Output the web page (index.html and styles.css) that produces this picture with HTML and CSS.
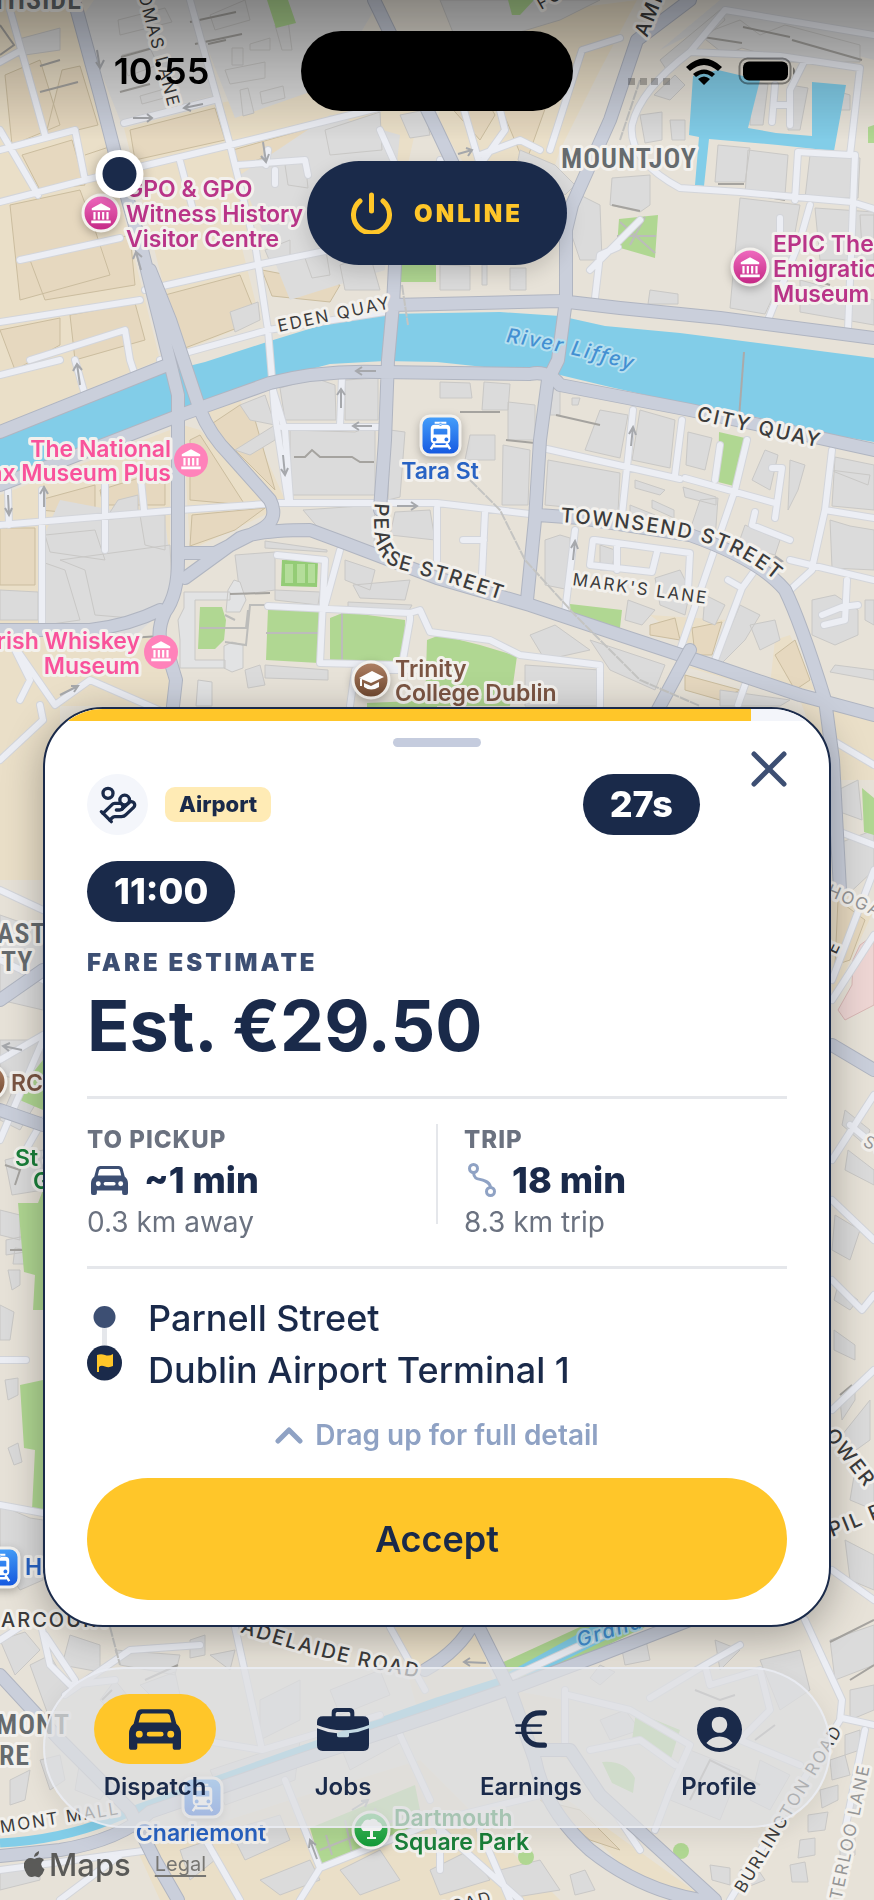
FILE: index.html
```html
<!DOCTYPE html>
<html lang="en">
<head>
    <meta charset="UTF-8">
    <meta name="viewport" content="width=device-width, initial-scale=1.0">
    <title>Dispatch</title>
    <link rel="stylesheet" href="styles.css">
</head>
<body>
<svg class="defs" width="0" height="0" aria-hidden="true">
    <symbol id="car" viewBox="0 0 157 123">
        <path fill-rule="evenodd" d="M38 0H119Q131 1 134 11L143 44Q157 56 157 73V115Q157 123 149 123H140Q132 123 132 115V104H25V115Q25 123 17 123H8Q0 123 0 115V73Q0 56 14 44L23 11Q26 1 38 0ZM41 13Q36 14 34 19L29 40H128L123 19Q121 14 116 13ZM31 65A10 10 0 1 0 31 86A10 10 0 1 0 31 65ZM126 65A10 10 0 1 0 126 86A10 10 0 1 0 126 65ZM61 68A7 7 0 0 0 61 83H97A7 7 0 0 0 97 68Z"/>
    </symbol>
    <symbol id="museum" viewBox="0 0 24 24">
        <path fill="#fff" d="M12 3 3.500 7.500V9.500H20.500V7.500ZM5 11H7V18H5ZM9 11H11V18H9ZM13 11H15V18H13ZM17 11H19V18H17ZM3 19H21V21.500H3Z"/>
    </symbol>
    <symbol id="train" viewBox="0 0 40 40">
        <path fill="#fff" fill-rule="evenodd" d="M14 6h12v2h-12zM19 7h2v3h-2zM14 9h12q4 0 4 4v11q0 4-4 4H14q-4 0-4-4V13q0-4 4-4zM14 13q-1 0-1 1v5h14v-5q0-1-1-1zM14 22a2 2 0 1 0 .1 0zM26 22a2 2 0 1 0 .1 0z"/>
        <path stroke="#fff" stroke-width="2.500" fill="none" d="M14 28l-4 6M26 28l4 6M13 31h14"/>
    </symbol>
</svg>

<!-- Map -->
<svg class="map" viewBox="0 0 874 1900" preserveAspectRatio="xMidYMin slice" role="img" aria-label="Map of central Dublin">
    <defs>
        <linearGradient id="pinkPin" x2="0" y2="1"><stop stop-color="#f06cc0"/><stop offset="1" stop-color="#c32683"/></linearGradient>
        <linearGradient id="bluePin" x2="0" y2="1"><stop stop-color="#45a0fb"/><stop offset="1" stop-color="#1457e0"/></linearGradient>
        <linearGradient id="brownPin" x2="0" y2="1"><stop stop-color="#b08164"/><stop offset="1" stop-color="#6e472f"/></linearGradient>
        <linearGradient id="greenPin" x2="0" y2="1"><stop stop-color="#4cc765"/><stop offset="1" stop-color="#119936"/></linearGradient>
        <path id="pearse" d="M375 503C372 535 376 560 396 568L450 583L520 606"/>
        <path id="townsend" d="M560 522Q640 528 700 541Q750 556 784 588"/>
        <path id="liffey" d="M506 342Q560 350 640 372"/>
        <path id="citypath" d="M696 420L830 450"/>
        <path id="adelaide" d="M240 1632Q320 1660 425 1679"/>
    </defs>

    <rect width="874" height="1900" fill="#e7e2d8"/>

    <!-- commercial areas -->
    <g fill="#eadfc8">
        <path d="M0 0H70L160 360L0 425ZM124 128L225 102L310 85L420 110L400 200L300 180L240 240L260 320L180 352ZM0 495L170 430V590L40 600V700H0ZM183 425L200 430L275 510L190 550ZM200 415L240 400L285 500L275 500ZM0 615L160 640L174 706H60V880H0ZM560 10L637 0L600 70L560 150L540 210L480 190L437 120L460 40L540 0ZM650 615L726 620L690 645ZM680 665L770 680L874 720V780H830L800 700ZM775 640L790 635L815 690L770 685Z"/>
        <path d="M830 880L874 910L832 1000ZM395 1627H475L500 1700L420 1720ZM137 1850L290 1800L420 1760L560 1900H160ZM510 1690L565 1700L570 1760L530 1750ZM540 1780L700 1895L640 1885Z"/>
    </g>
    <g fill="#e6d8bf" stroke="#cbbd9f" stroke-width="1">
        <path d="M5 75L40 60L60 125L12 145ZM62 70L80 66L98 125L45 138ZM22 155L72 140L85 185L40 190ZM85 155L115 145M130 130L215 108L225 140L135 160ZM233 150L310 128L314 140L240 166ZM262 96L300 90M10 205L80 190L95 230L110 275L20 300ZM30 260L130 235L135 285L45 300ZM165 295L240 275L258 320L185 348ZM262 270L340 285L330 302L272 296ZM0 330L60 318V345L15 370ZM70 315L135 303L145 340L75 360ZM40 500L95 485V515L40 510ZM190 440L200 435L245 505L190 500ZM192 515L265 508L235 530L190 546ZM210 425L240 405L255 420L275 490Z"/>
        <path d="M0 528H35V585H0ZM100 490L165 470V505H103ZM440 95L470 70L495 115L480 140ZM500 105L535 80L550 95L525 165ZM445 60L480 30L500 45L470 65ZM650 625L675 618L680 640L650 635ZM692 628L722 622L712 655L695 655ZM775 655L795 640L810 680L795 690ZM685 675L740 690L720 700L685 690ZM838 900L865 920L850 960L835 965ZM540 1800L580 1810L620 1850L590 1840Z"/>
    </g>

    <!-- blocks of grey buildings -->
    <g fill="#dcdcdc">
        <path d="M94 0H200L215 95L120 120L80 20ZM190 0H380L330 85L235 118L212 60ZM240 175L330 115L400 135L385 270L290 300ZM60 500L165 520L175 600L130 640L45 640L42 540ZM660 50L720 0H874V60L800 40L700 30Z"/>
    </g>
    <g class="buildings">
        <path d="M15 40L60 28V50L25 55ZM118 20L165 8L172 22L120 35ZM122 55L150 48L158 65L128 76ZM210 15L245 0L250 20L215 30ZM225 70L265 62V78L230 84ZM250 44L270 38V50H250ZM275 25L288 20L292 50H282ZM232 48H243V65H232ZM260 92L283 86L285 98L262 104ZM240 90L248 88L254 113L243 116ZM140 96L175 86V95L142 104ZM325 130L380 112L382 150L330 155ZM285 165L305 160L308 188L288 185ZM265 250L290 240V255L270 262ZM305 258L325 245L330 275L312 278ZM340 265L370 255L380 290L345 290ZM230 312L258 302L260 320L235 332ZM400 115L425 110L430 135L410 138ZM440 0L600 0L560 20L460 50ZM520 150L555 165L575 185L565 195L518 160Z"/>
        <path d="M700 35L740 20L760 35L785 25L860 45V62H790L742 48L725 55ZM660 60L720 10L725 20L668 72ZM640 115L662 112V140L645 143ZM670 120H685V140H672ZM654 95L670 100L685 85L675 75ZM790 85L808 88L800 130H788ZM752 82L768 84L763 125H750ZM840 92L850 95V110H840ZM612 178L650 175V205L640 212L610 205ZM718 145L750 148L745 182H715ZM748 150L788 155L785 195H745ZM810 155L860 158L858 198H805ZM740 198L800 205L790 260L765 314L730 308ZM815 208L874 212V260H820ZM580 195L600 205L602 260H580L570 230ZM860 215H874V250H862ZM800 280L874 300V325L800 312ZM650 290L678 294V304H648ZM440 265L470 266V290H440ZM510 268H526V290H510ZM482 265V285H487V265Z"/>
        <path d="M240 405L265 395L275 425L250 420ZM280 388L315 378L335 385L336 420H285ZM345 380L378 378V420H345ZM290 430L355 432L375 425V495L290 495ZM235 450L275 425V440L250 455ZM390 430L405 432L400 497L388 500ZM303 510L375 505L374 548L320 530ZM395 512L430 510L435 540L390 535ZM118 500L138 495V515L105 520ZM140 515H165V550L145 545ZM45 535L95 530L105 560L50 552ZM45 563L65 570L80 620L45 625ZM60 560L170 545L172 590L155 620L95 615L85 570ZM0 590L38 592V620H0ZM235 555L275 552V590L240 595ZM265 541L327 550V552L265 548ZM275 590L320 592L318 605L275 600ZM345 560L375 570L370 590L345 580ZM353 585L410 580L405 600L360 598ZM348 602L412 605L408 612L348 608ZM265 665L328 670V680L265 678ZM245 670L260 665L265 685L248 688Z"/>
        <path fill="#e2e3e4" d="M184 592H230V600H195V660H225V668H180V640L178 620L184 608ZM228 590L234 580L240 582L246 600L240 612H226ZM224 646L232 642L243 645V668L232 672L224 668ZM198 680L212 682V706H196Z"/>
        <path d="M440 382L470 383L472 398H440ZM484 382L510 384L508 410H482ZM508 402L535 405V440H508ZM503 445L530 450L528 505H502ZM470 435H495V460H465ZM553 390L560 385V415H550ZM572 398H580L578 405H572ZM600 410L628 415L620 458L585 450ZM640 410L675 420L670 468L632 460ZM688 432L712 438L705 470L686 465ZM548 460L620 473L618 512L545 505ZM635 480L665 490L660 495L635 488ZM683 487L716 497V505L685 497ZM652 500L674 510V518L652 508ZM718 498L715 540L690 530L700 500ZM630 505L655 515V525L630 522ZM745 525L780 540L775 555L738 545ZM765 450L778 455L770 490L752 480ZM790 460L805 465L798 490L788 510ZM835 457L874 465V510L832 506ZM830 520L850 526L874 530V570L832 568ZM560 535L570 538V590L545 585V540ZM600 545L615 550L612 570H600ZM655 578L680 570L690 590L685 615L660 605ZM628 600L655 610L642 625L625 620ZM705 595L725 605L715 625L703 620ZM740 605L760 615L745 640L720 665H715ZM750 625L775 620L780 640L760 650ZM530 635L555 625L590 650L545 660ZM525 665L600 670V706H525ZM590 640L665 665L655 690L610 670ZM720 690L790 700L780 706H720ZM830 470L870 475L868 485ZM812 600L835 595L858 610V635L835 645L812 635ZM865 600H874V625L865 620ZM835 665L874 670V680L830 672Z"/>
        <path d="M0 1040H43V1085L0 1075ZM15 1085L38 1100L20 1130L0 1120ZM5 1160L43 1150V1190L12 1195ZM0 1210L20 1215V1240L0 1235ZM15 1248L30 1250V1264H13ZM0 1305L14 1312L10 1340H0ZM6 1240L25 1236V1252L6 1255ZM8 1270H20V1285L12 1290ZM0 915L43 930V1010L0 1000ZM5 1380L18 1378V1395L8 1400ZM8 1448L18 1443L22 1462L14 1465ZM0 1505L30 1518L43 1520V1580L20 1590L0 1560Z"/>
        <path d="M838 790L858 780L862 820L840 812ZM842 842L874 830V870L842 900ZM845 1110L870 1130L865 1145L842 1125ZM848 1150L874 1170V1185L845 1170ZM835 1215L860 1230L850 1260L832 1250ZM838 1285L858 1300L850 1310L834 1300ZM834 1330L855 1345V1360L834 1350ZM840 1400L855 1385V1400L842 1420ZM838 1440L870 1400V1440L842 1460ZM855 1470L874 1475V1510L850 1500ZM845 1540L874 1555V1590L850 1580Z"/>
        <path d="M70 1635L100 1645V1672L62 1665ZM0 1640L25 1632L40 1650L15 1675ZM30 1665L50 1655L70 1690L60 1700L50 1720ZM115 1650L180 1655L175 1675L120 1665ZM190 1640L205 1635V1655L190 1658ZM210 1655L235 1650L230 1670ZM140 1685L175 1672L180 1695H150ZM100 1700L115 1680L135 1705L120 1720ZM260 1700L300 1680V1720L260 1740ZM330 1690L380 1670L390 1695L340 1715ZM40 1760L60 1755L65 1780L50 1790ZM10 1780L30 1770L25 1800L10 1805ZM80 1760L110 1785L100 1800L75 1790ZM0 1870L40 1860V1880L0 1890ZM210 1770L300 1740L295 1780L225 1805ZM340 1745L400 1720L405 1740L350 1770ZM180 1850L210 1840L215 1860L190 1880ZM230 1830L280 1815L290 1840L245 1860ZM260 1880L310 1860L320 1880L280 1895ZM340 1870L380 1850L400 1880L360 1895ZM430 1870L470 1850L490 1880L440 1895Z"/>
        <path d="M600 1665L615 1672L600 1685L590 1678ZM620 1640L645 1635L650 1660L625 1665ZM715 1640L740 1650L720 1670ZM760 1660L800 1650L810 1690L780 1710ZM830 1640L874 1625V1665L835 1680ZM850 1690L874 1685V1710L850 1720ZM600 1720L625 1710L640 1730L610 1740ZM690 1750L740 1770L720 1820L670 1800ZM760 1760L790 1775L770 1810L750 1800ZM845 1735L860 1730V1750L845 1755ZM830 1760L845 1755L850 1775L832 1780ZM820 1790L838 1785V1800L822 1808ZM808 1815L828 1812L825 1830L808 1832ZM800 1840L815 1838V1855L798 1858ZM790 1865L805 1862L808 1882H792ZM850 1790L862 1785V1810L848 1815ZM840 1840L855 1835V1855L840 1860ZM710 1865L730 1868V1885L712 1880ZM500 1870L540 1860L560 1890L510 1898ZM570 1875L585 1870L595 1890L575 1895ZM740 1870L755 1865L765 1880L745 1888Z"/>
        <path fill="#eed6d4" stroke="#d9b7b5" d="M853 960L860 945L874 935V1005L845 1020L838 1010L852 985Z"/>
    </g>
    <path class="walls" d="M121 57L160 46M120 92L150 84M40 92L78 82M40 66L60 60M190 22L236 12M195 44L242 34M208 44L226 40M294 457H305L312 450L320 457H352L360 462H374M0 25L14 45L0 55M703 37L742 43M743 27L790 37M792 40L862 60M612 205L640 211M718 184H744M745 193L785 200M800 275L830 285M460 412H500M506 440L535 443M556 415L600 425M160 636L100 640M230 594L270 593M5 1165L20 1170L15 1185M10 1250H30M840 1395L852 1385M830 1642L874 1620M850 1680L874 1665M695 1690L720 1700L735 1695M755 1740L775 1725M102 1700L112 1690M145 1680L178 1665M690 1800L710 1760L760 1785"/>

    <!-- parks -->
    <g fill="#b0d792">
        <path d="M267 0H288L296 23L276 28ZM508 0H534L520 15H512ZM619 219L658 215L655 258L617 247ZM399 265H436V282H398ZM719 432L745 438L734 486L718 482ZM874 125L868 127V143H874ZM570 604L622 610L620 628L571 615Z"/>
        <path d="M200 607H222L226 620L224 640L215 649H198ZM268 609L320 610L319 663L266 660ZM330 618L345 612L405 620L404 666L330 661ZM427 640L440 635L480 645L517 656L510 706H425ZM367 703L437 700V710H367Z"/>
        <path d="M43 1060V1110L15 1098L25 1082L35 1070ZM43 1190V1310L33 1310L35 1275L24 1272L18 1203L38 1203ZM20 1385L43 1380V1510H32L35 1450L24 1448ZM862 788L874 798V835L864 832ZM497 1665L580 1627H645L560 1668L508 1680ZM310 1828L415 1785L424 1830L322 1868ZM636 1712L680 1730L670 1762L632 1740ZM602 1762Q625 1760 635 1778L633 1793L612 1783Z"/>
        <circle cx="526" cy="1857" r="8"/><circle cx="681" cy="1851" r="8"/><path d="M670 1862L678 1845L688 1855Z"/>
    </g>
    <path fill="#94cc76" d="M282 560L318 561L317 587L281 586Z"/>
    <path fill="#b4dd9a" d="M285 564H293V583H285ZM297 564H305V583H297ZM308 564H315V583H308Z"/>
    <path fill="none" stroke="#bcbcba" stroke-width="2" d="M200 628H246L248 610M225 615L235 620M225 642L246 645L250 605H266M342 613V660M266 633H318M620 222L655 253M617 236H656M645 217L630 245M326 1835L332 1855M345 1820L352 1853M375 1808L383 1840M320 1850L420 1810"/>

    <!-- water -->
    <g fill="#82cde8">
        <path d="M0 438L165 372L205 362L270 341L335 321L385 314L500 312L560 316L605 326L680 333L874 358V442L833 435L760 418L690 405L610 387L560 375L437 362L385 361L330 364L270 380L205 404L175 413L90 447L0 488Z"/>
        <path d="M693 76L718 70L760 80L748 128L776 133L812 136V82L846 85L834 151L778 145L709 139L704 186L695 185L699 137L689 135Z"/>
    </g>
    <path fill="none" stroke="#82cde8" stroke-width="9" d="M0 1843Q60 1840 110 1820L140 1808L260 1765L437 1702L500 1682L600 1627"/>
    <path fill="none" stroke="#82cde8" stroke-width="14" d="M525 1672L610 1630"/>
    <path fill="none" stroke="#aaa" stroke-width="2" d="M744 352L739 418"/>

    <!-- minor roads -->
    <g class="minor-edge">
        <path id="minor" d="M0 62L18 52M10 10L45 135M0 130L38 195M0 150L75 130L85 180M0 202L85 180L230 145L390 105M124 123L214 100M190 0L230 145L256 250L268 330L275 415L288 500M180 161L193 210M20 260L120 238M145 290L256 265L330 250M0 322L140 300M160 360L268 330L385 312M30 360L125 330L130 360M0 375L60 360M238 165L305 160L308 175M266 165L268 150M275 170V184M380 130L400 175M464 110L480 165L505 130L500 110M440 160L525 185M550 150L582 50L620 38M480 155L520 140L540 150M437 70L460 55M640 220L590 270M595 298L600 255L618 247M874 35L725 10L690 52Q640 90 632 125Q628 160 680 188L740 192L852 202L874 209M690 52L780 56L860 68L850 155L798 152L795 200M855 155L848 330M810 205L800 240L768 320M780 218V245M775 85L772 122M805 60L790 90V125M775 105H790M75 360L85 395M130 360L135 375M8 490L9 525M0 525L180 510L280 503L437 503L530 514M42 490V630M105 480V550M140 470L144 510M273 390L285 430L290 500M342 377L340 425M282 427H380M633 410L622 515M682 420L675 475M547 449L680 479M685 478L775 503M720 445L715 480M747 440L735 490L680 650M772 468H782L775 518M755 512L752 525L790 540M832 450L825 510L812 568M825 510L874 518M790 560L874 580M790 590L812 570M575 530L565 612M595 540L690 553L688 590M593 540L590 565L652 572L657 552M617 545V570M690 590L685 600M728 580L742 588L715 660M742 588L755 570M437 508V560M463 540H484M485 512L482 575M847 580L845 620L824 625M858 605L842 607L822 615M268 606L410 613M410 613V620L402 665L320 663L325 560L277 555M325 605L340 550M410 613L420 610L430 632L490 640L520 655L600 665V706M350 706L355 670L435 670M738 705L745 685"/>
    </g>
    <use href="#minor" class="minor"/>
    <g class="minor-edge">
        <path id="minor2" d="M10 640L55 705L90 680L170 715M20 700L30 680L10 640M40 705L43 720M0 760L43 720M0 890L43 910M0 1060L43 1035M43 980L0 960M0 1140L43 1040M20 1160L43 1120M0 1360H26M0 1505L43 1513M832 740L874 765M835 830L874 845M874 870L832 980M874 935L832 1000M832 1160L874 1095M850 1125L874 1145M832 1200L874 1240M832 1280L862 1310L874 1295M832 1410L874 1370M832 1570L874 1600M40 1620L50 1665L70 1685L115 1680M65 1695L130 1650L200 1645M235 1627L262 1750M390 1627L425 1690M45 1635L75 1680M150 1700L200 1740L262 1750L380 1715M285 1780L320 1868L300 1900M320 1868L440 1820L560 1790M400 1735L430 1800M200 1830L240 1900M0 1870L150 1850M120 1855L60 1900M505 1680L620 1627M565 1690V1750M568 1695L630 1710L690 1745L670 1790L655 1830M590 1750L640 1740L675 1765M650 1698L705 1665L710 1685L760 1670L770 1710L740 1740M705 1665L740 1645M740 1740L800 1765M805 1620L842 1700L840 1720L730 1900M842 1718L874 1725M865 1730L845 1830M0 1910M430 1820L520 1900M480 1830L510 1900M440 1820V1870M0 1640L20 1627M600 1790L640 1850"/>
    </g>
    <use href="#minor2" class="minor"/>

    <!-- main roads -->
    <g class="major-edge">
        <path id="major" d="M74 0L100 95L118 165L142 250L162 330L178 395M374 0L437 130L470 200M690 0L637 40L610 120L572 205L566 230V300L558 360L548 380L540 440L535 520L527 600M395 265L393 305L388 360L385 440L380 510M393 305L437 304L560 301L620 308L720 318L874 338M0 432L165 366M0 485L175 417L200 408L270 383Q320 370 380 372L530 374Q548 370 560 385L690 410L760 425L874 450M178 395V560Q178 595 165 612Q152 640 170 660L176 680L172 715M150 270L170 320L200 410Q210 435 230 455L270 500Q280 520 260 530L215 553H185M185 578L240 538Q260 530 310 530L345 543L437 578L530 605L620 635L720 668L800 695L874 715M160 610Q130 625 90 630H0M538 515L580 518L690 535Q760 560 785 590Q800 620 825 700L833 760L840 890"/>
    </g>
    <use href="#major" class="major"/>
    <g class="major-edge">
        <path id="major2" d="M0 1110L43 1125M832 1045L874 1070M690 650L655 715M0 1675L60 1740L130 1810L155 1860L178 1900M0 1856L60 1850Q120 1840 150 1812L300 1760L437 1714L520 1685L600 1655L690 1620M425 1670Q460 1650 475 1620L510 1690L535 1760Q545 1810 590 1850Q640 1890 700 1900M535 1750H570L600 1795L715 1900M0 1000L43 970"/>
    </g>
    <use href="#major2" class="major"/>
    <path class="rail" d="M402 285L408 325M640 80L620 140M470 480L500 510L525 560L575 615L640 680L700 706M110 1627L120 1665"/>

    <!-- one-way arrows -->
    <g class="arrows">
        <path d="M97 50L100 68M96 62L100 68L104 60M133 118H152M147 114L152 118L147 122M203 104L184 108M190 103L184 108L191 111M263 142L266 162M261 156L266 162L269 154M141 270L136 252M133 259L136 252L142 257M80 385L77 364M73 371L77 364L82 370M376 371H356M362 367L356 371L362 375M341 408V389M337 395L341 389L345 395M372 426H353M359 422L353 426L359 430M283 455L285 475M281 469L285 475L288 468M8 495L9 515M5 508L9 515L12 508M44 507V487M40 494L44 487L48 494M397 506H417M411 502L417 506L411 510M631 446L633 427M629 434L633 427L636 435M573 560L575 541M571 548L575 541L578 549M765 555L782 561M775 556L782 561L775 564M60 695L78 686M71 686L78 686L74 692M458 154L472 150M466 148L472 150L468 156M22 1050L3 1046M10 1043L3 1046L9 1051M352 1810L368 1800M361 1801L368 1800L365 1807M317 1859L310 1840M309 1848L310 1840L316 1845M486 1663L464 1662M470 1658L464 1662L470 1666"/>
    </g>

    <!-- street labels -->
    <g class="label street">
        <text class="thin" transform="translate(131 -32) rotate(75)">THOMAS LANE</text>
        <text class="thin" x="279" y="332" transform="rotate(-12 279 332)">EDEN QUAY</text>
        <text x="647" y="38" transform="rotate(-68 647 38)">AMIENS</text>
        <text class="thin" x="541" y="10" transform="rotate(-30 541 10)">FOLEY</text>
        <text><textPath href="#citypath">CITY QUAY</textPath></text>
        <text><textPath href="#townsend">TOWNSEND STREET</textPath></text>
        <text><textPath href="#pearse">PEARSE STREET</textPath></text>
        <text class="thin" x="572" y="585" transform="rotate(8 572 585)">MARK'S LANE</text>
        <text class="faint" x="826" y="895" transform="rotate(23 826 895)">HOGAN</text>
        <text class="thin" x="836" y="955" transform="rotate(-65 836 955)">E</text>
        <text class="faint" x="862" y="1145" transform="rotate(30 862 1145)">SO</text>
        <text x="1" y="1627">ARCOURT</text>
        <text><textPath href="#adelaide">ADELAIDE ROAD</textPath></text>
        <text class="thin" x="1" y="1833" transform="rotate(-9 1 1833)">MONT MALL</text>
        <text class="thin" x="744" y="1894" transform="rotate(-59 744 1894)">BURLINGTON ROAD</text>
        <text class="faint" x="835" y="1930" transform="rotate(-78 835 1930)">WATERLOO LANE</text>
        <text x="824" y="1435" transform="rotate(52 824 1435)">OWER</text>
        <text x="832" y="1537" transform="rotate(-22 832 1537)">PIL R</text>
        <text class="thin" x="440" y="1916" transform="rotate(-14 440 1916)">ROAD</text>
    </g>
    <g class="label water">
        <text><textPath href="#liffey">River Liffey</textPath></text>
        <text x="579" y="1647" transform="rotate(-17 579 1647)">Grand Canal</text>
    </g>
    <g class="label district">
        <text x="-60" y="9">NORTHSIDE</text>
        <text x="561" y="168">MOUNTJOY</text>
        <text x="-3" y="943">AST</text>
        <text x="1" y="971">TY</text>
        <text x="-4" y="1734">MONT</text>
        <text x="-1" y="1765">RE</text>
    </g>

    <!-- places -->
    <g class="pin">
        <circle cx="101" cy="213" r="18" fill="url(#pinkPin)"/>
        <use href="#museum" x="88" y="200" width="26" height="26"/>
        <circle cx="750" cy="267" r="18" fill="url(#pinkPin)"/>
        <use href="#museum" x="737" y="254" width="26" height="26"/>
        <circle cx="371" cy="680" r="18" fill="url(#brownPin)"/>
        <path stroke="none" fill="#fff" d="M359 678L372 671L384 677L371 683ZM364 683L371 686L379 682V687Q371 692 364 687ZM360 679H362V686H360Z"/>
        <circle cx="-12" cy="1082" r="18" fill="url(#brownPin)"/>
        <circle cx="371" cy="1830" r="18" fill="url(#greenPin)"/>
        <path stroke="none" fill="#fff" d="M370 1828H373V1837H376V1839H367V1837H370Z"/>
        <path stroke="none" fill="#fff" d="M363 1831A5 5 0 0 1 363 1823A5 5 0 0 1 370 1820A5 5 0 0 1 378 1822A5 5 0 0 1 380 1831Z"/>
        <rect x="421" y="416" width="39" height="39" rx="9" fill="url(#bluePin)"/>
        <use href="#train" x="421" y="416" width="39" height="39"/>
        <rect x="183" y="1778" width="39" height="39" rx="9" fill="url(#bluePin)"/>
        <use href="#train" x="183" y="1778" width="39" height="39"/>
        <rect x="-20" y="1548" width="39" height="39" rx="9" fill="url(#bluePin)"/>
        <use href="#train" x="-20" y="1548" width="39" height="39"/>
    </g>
    <circle cx="191" cy="460" r="17" fill="#ff82ba"/>
    <use href="#museum" x="178" y="446" width="26" height="26"/>
    <circle cx="161" cy="652" r="17" fill="#ff82ba"/>
    <use href="#museum" x="148" y="638" width="26" height="26"/>

    <g class="label place">
        <g fill="#b93488">
            <text x="126" y="197">GPO &amp; GPO</text>
            <text x="126" y="222">Witness History</text>
            <text x="126" y="247">Visitor Centre</text>
            <text x="773" y="252">EPIC The Irish</text>
            <text x="773" y="277">Emigration</text>
            <text x="773" y="302">Museum</text>
        </g>
        <g fill="#f9529b" text-anchor="end">
            <text x="171" y="457">The National</text>
            <text x="171" y="481">Wax Museum Plus</text>
            <text x="140" y="649">Irish Whiskey</text>
            <text x="140" y="674">Museum</text>
        </g>
        <g fill="#7b5543">
            <text x="395" y="677">Trinity</text>
            <text x="395" y="701">College Dublin</text>
            <text x="11" y="1091">RCSI</text>
        </g>
        <g fill="#2863c4">
            <text x="440" y="479" text-anchor="middle">Tara St</text>
            <text x="201" y="1841" text-anchor="middle">Charlemont</text>
            <text x="25" y="1575">Harcourt</text>
        </g>
        <g fill="#1a803a">
            <text x="394" y="1826">Dartmouth</text>
            <text x="394" y="1850">Square Park</text>
            <text x="15" y="1166">St Stephen's</text>
            <text x="33" y="1189">Green</text>
        </g>
    </g>

    <g class="driver">
        <circle cx="119.500" cy="174" r="24" fill="#fff"/>
        <circle cx="119.500" cy="174" r="17" fill="#1a2a4a"/>
    </g>
</svg>

<div class="screen">
    <header class="status-bar">
        <span class="clock">10:55</span>
        <span class="island"></span>
        <span class="indicators">
            <svg class="signal" viewBox="0 0 42 7"><path d="M0 0h7v7h-7zM12 0h7v7h-7zM23 0h7v7h-7zM35 0h7v7h-7z"/></svg>
            <svg class="wifi" viewBox="0 0 36 27">
                <path d="M18 27l-6-6q6-5 12 0zM7 16l3 3q8-6.500 16 0l3-3q-11-9-22 0zM0 9l4 4q14-12 28 0l4-4q-18-17-36 0z"/>
            </svg>
            <svg class="battery" viewBox="0 0 60 28">
                <rect x="1.500" y="1.500" width="51" height="25" rx="8" fill="none" stroke="#000" stroke-opacity=".4" stroke-width="2"/>
                <rect x="5" y="4.500" width="45" height="19" rx="6"/>
                <path d="M55 10q4 4 0 8z" fill-opacity=".45"/>
            </svg>
        </span>
    </header>

    <button class="online-btn" type="button">
        <svg class="power" viewBox="0 0 41 42"><path d="M9 9A18 18 0 1 0 32 9M20.500 3V19"/></svg>
        ONLINE
    </button>

    <main class="sheet">
        <div class="countdown"><div class="countdown-fill" style="width: 90%"></div></div>
        <div class="handle"></div>

        <div class="sheet-head">
            <span class="round-icon">
                <svg viewBox="0 0 24 24">
                    <path d="M11 15h2a2 2 0 1 0 0-4h-3c-.6 0-1.100.2-1.400.6L3 17"/>
                    <path d="m7 21 1.600-1.400c.3-.4.8-.6 1.400-.6h4c1.100 0 2.100-.4 2.800-1.200l4.600-4.400a2 2 0 0 0-2.750-2.910l-4.200 3.900"/>
                    <path d="m2 16 6 6"/>
                    <circle cx="16" cy="9" r="2.900"/>
                    <circle cx="6" cy="5" r="3"/>
                </svg>
            </span>
            <span class="tag">Airport</span>
            <span class="chip timer">27s</span>
            <button class="close-btn" type="button" aria-label="Close">
                <svg viewBox="0 0 36 36"><path d="M3 3L33 33M33 3L3 33"/></svg>
            </button>
        </div>
        <span class="chip">11:00</span>

        <h2 class="fare-label">FARE ESTIMATE</h2>
        <p class="fare">Est. €29.50</p>

        <div class="stats">
            <div class="stat">
                <h3 class="stat-label">TO PICKUP</h3>
                <p class="stat-value">
                    <svg class="stat-car"><use href="#car"/></svg>
                    ~1 min
                </p>
                <p class="stat-note">0.3 km away</p>
            </div>
            <div class="stat-divider"></div>
            <div class="stat">
                <h3 class="stat-label">TRIP</h3>
                <p class="stat-value">
                    <svg class="stat-route" viewBox="0 0 28 34"><circle cx="5.500" cy="5.500" r="4"/><circle cx="22.500" cy="28.500" r="4"/><path d="M5.500 9.500C6 18 12 15 17 18Q22 20 22.500 24.500"/></svg>
                    18 min
                </p>
                <p class="stat-note">8.3 km trip</p>
            </div>
        </div>

        <div class="route">
            <svg class="route-marks" viewBox="0 0 35 104">
                <path fill="#e5e7eb" d="M15 36H20V56H15Z"/>
                <circle cx="17.500" cy="25" r="11" fill="#3d4f73"/>
                <circle cx="17.500" cy="71" r="17.500" fill="#1a2a4a"/>
                <path fill="#ffc629" d="M10 63q4-1.500 8 0t8-1v12q-4 2-8 .5t-6 .5v5h-2z"/>
            </svg>
            <ul class="stops">
                <li>Parnell Street</li>
                <li>Dublin Airport Terminal 1</li>
            </ul>
        </div>

        <p class="drag-hint">
            <svg viewBox="0 0 28 18"><path d="M3 15L14 4L25 15"/></svg>
            Drag up for full detail
        </p>
        <button class="accept-btn" type="button">Accept</button>
    </main>

    <nav class="tab-bar">
        <a class="tab active" href="#dispatch">
            <span class="tab-icon"><svg class="tab-car"><use href="#car"/></svg></span>
            Dispatch
        </a>
        <a class="tab" href="#jobs">
            <span class="tab-icon">
                <svg class="tab-jobs" viewBox="0 0 156 129">
                    <path d="M44 25V14Q44 0 58 0H98Q112 0 112 14V25H138Q156 25 156 42V51Q78 83 0 51V42Q0 25 18 25ZM56 25H100V17Q100 12 95 12H61Q56 12 56 17Z"/>
                    <path d="M0 61Q30 74 60 76V83Q60 88 66 88H90Q96 88 96 83V76Q126 74 156 61V112Q156 129 139 129H17Q0 129 0 112Z"/>
                </svg>
            </span>
            Jobs
        </a>
        <a class="tab" href="#earnings">
            <span class="tab-icon">
                <svg class="tab-euro" viewBox="0 0 96 113">
                    <path stroke-width="16" d="M88 8H74C46 8 26 28 26 56.500S46 105 74 105H88"/>
                    <path stroke-width="7" d="M4 46H78M4 68H78"/>
                </svg>
            </span>
            Earnings
        </a>
        <a class="tab" href="#profile">
            <span class="tab-icon">
                <svg class="tab-profile" viewBox="0 0 134 134">
                    <path d="M67 0A67 67 0 1 0 67 134A67 67 0 1 0 67 0ZM67 29C81 29 90 39 90 52S81 77 67 77S44 66 44 52S53 29 67 29ZM28 107Q45 88 67 88T106 107Q90 122 67 122T28 107Z"/>
                </svg>
            </span>
            Profile
        </a>
    </nav>

    <footer class="attribution">
        <svg class="apple" viewBox="0 0 21 27"><path d="M15 0q.5 5-5 6Q10 2 15 0ZM10.500 8q2-1.500 5-1.500t4.500 2.500q-6 4 .5 9.500-1.500 5-5 7.500-1.500.5-3-.3t-3.500.1Q5 27 2.500 22.500-3 13 2.500 8.500 6 6 10.500 8Z"/></svg>
        <span class="maps">Maps</span>
        <a class="legal" href="#legal">Legal</a>
    </footer>
</div>
</body>
</html>
```
FILE: styles.css
```css
:root {
    --navy: #1a2a4a;
    --slate: #3d4f73;
    --mist: #8fa2c4;
    --yellow: #ffc629;
    --grey: #6b7280;
    --line: #e5e7eb;
}

* {
    margin: 0;
    padding: 0;
    box-sizing: border-box;
}

body {
    position: relative;
    min-height: 100vh;
    overflow-x: hidden;
    font-family: Inter, "Liberation Sans", sans-serif;
    color: var(--navy);
    background: #e7e2d8;
}

button {
    border: none;
    font: inherit;
    color: inherit;
    background: none;
    cursor: pointer;
}

svg {
    display: block;
    flex: none;
}

.defs {
    position: absolute;
}

/* Map */
.map {
    position: absolute;
    top: 0;
    left: 0;
    width: 100%;
    height: 100%;
}

.buildings {
    fill: #dbdbdb;
    stroke: #c9c8c6;
    stroke-width: 1;
}

.walls {
    fill: none;
    stroke: #a5a39f;
    stroke-width: 2;
}

/* each road is drawn twice: a wide edge, then a narrower surface */
.minor-edge, .major-edge, .minor, .major {
    fill: none;
    stroke-linejoin: round;
    stroke-linecap: round;
}

.minor-edge {
    stroke: #d3d5da;
    stroke-width: 8;
}

.minor {
    stroke: #eceef4;
    stroke-width: 6;
}

.major-edge {
    stroke: #b0b5c1;
    stroke-width: 14;
}

.major {
    stroke: #cacfdb;
    stroke-width: 12;
}

.rail {
    fill: none;
    stroke: #c4c4c2;
    stroke-width: 2;
    stroke-dasharray: 10 1;
}

.arrows {
    fill: none;
    stroke: #a6a8ac;
    stroke-width: 2;
}

.label text {
    stroke: #f3f1ed;
    stroke-width: 6px;
    stroke-linejoin: round;
    paint-order: stroke;
}

.street {
    font-size: 20px;
    font-weight: 500;
    letter-spacing: 2px;
    fill: #3c3c3c;
}

.street .thin {
    font-size: 17px;
    font-weight: 400;
}

.street .faint {
    font-size: 17px;
    font-weight: 400;
    fill: #969696;
}

.water {
    font-size: 20px;
    font-style: italic;
    font-weight: 500;
    letter-spacing: 2px;
    fill: #4390d2;
}

.label.water text {
    stroke: #b5dfef;
    stroke-width: 4px;
}

.district {
    font-family: Roboto, Inter, sans-serif;
    font-stretch: condensed;
    font-size: 28px;
    font-weight: 600;
    letter-spacing: 1px;
    fill: #666b6e;
}

.place {
    font-size: 23px;
    font-weight: 600;
}

.pin {
    filter: drop-shadow(0 3px 4px rgba(0, 0, 0, 0.25));
}

.pin circle, .pin rect {
    stroke: #f3f1ed;
    stroke-width: 3;
}

.driver {
    filter: drop-shadow(0 2px 6px rgba(0, 0, 0, 0.3));
}

/* Foreground */
.screen {
    position: relative;
    display: flex;
    flex-direction: column;
    min-height: 100vh;
    background: linear-gradient(rgba(0, 0, 0, 0.4), rgba(0, 0, 0, 0.18) 70px, transparent 140px);
}

.status-bar {
    display: grid;
    grid-template-columns: 1fr 272px 1fr;
    align-items: center;
    padding: 31px 22px 0;
    color: #000;
}

.clock {
    font-size: 36px;
    font-weight: 600;
    text-align: center;
}

.island {
    height: 80px;
    border-radius: 40px;
    background: #000;
}

.indicators {
    display: flex;
    align-items: center;
    justify-content: center;
    gap: 16px;
}

.signal {
    width: 42px;
    height: 7px;
    margin-top: 20px;
    opacity: 0.25;
}

.wifi {
    width: 36px;
    height: 27px;
}

.battery {
    width: 60px;
    height: 28px;
}

.online-btn {
    display: flex;
    align-items: center;
    align-self: center;
    gap: 22px;
    height: 104px;
    margin-top: 50px;
    padding: 0 44px;
    border-radius: 52px;
    font-size: 24px;
    font-weight: 900;
    letter-spacing: 3px;
    color: var(--yellow);
    background: var(--navy);
    box-shadow: 0 8px 20px rgba(0, 0, 0, 0.15);
}

.power {
    width: 41px;
    height: 42px;
    fill: none;
    stroke: var(--yellow);
    stroke-width: 5;
    stroke-linecap: round;
}

/* Offer sheet */
.sheet {
    display: flex;
    flex-direction: column;
    align-items: flex-start;
    margin: auto 43px 0;
    padding: 0 42px 25px;
    border: 2px solid var(--navy);
    border-radius: 60px;
    background: #fff;
    box-shadow: 0 8px 40px rgba(0, 0, 0, 0.3);
    overflow: hidden;
}

.countdown {
    align-self: stretch;
    height: 12px;
    margin: 0 -42px;
    background: #f3f5fa;
}

.countdown-fill {
    height: 100%;
    background: var(--yellow);
}

.handle {
    align-self: center;
    width: 88px;
    height: 9px;
    margin-top: 17px;
    border-radius: 5px;
    background: #c5ccde;
}

.sheet-head {
    display: flex;
    align-items: flex-end;
    align-self: stretch;
    height: 88px;
    margin-bottom: 26px;
}

.round-icon {
    display: grid;
    place-items: center;
    width: 61px;
    height: 61px;
    border-radius: 50%;
    background: #f4f6fb;
}

.round-icon svg {
    width: 40px;
    height: 40px;
    fill: none;
    stroke: var(--navy);
    stroke-width: 2;
    stroke-linecap: round;
    stroke-linejoin: round;
}

.tag {
    margin: 0 auto 13px 17px;
    padding: 0 14px;
    border-radius: 10px;
    font-size: 22px;
    font-weight: 800;
    line-height: 35px;
    background: #ffebb5;
}

.chip {
    padding: 0 27px;
    border-radius: 31px;
    font-size: 36px;
    font-weight: 800;
    line-height: 61px;
    color: #fff;
    background: var(--navy);
}

.timer {
    margin-right: 51px;
}

.close-btn {
    align-self: flex-start;
    padding: 4px 0;
}

.close-btn svg {
    width: 36px;
    height: 36px;
    fill: none;
    stroke: var(--slate);
    stroke-width: 5;
    stroke-linecap: round;
}

.fare-label {
    margin-top: 25px;
    font-size: 24px;
    font-weight: 900;
    line-height: 32px;
    letter-spacing: 3px;
    color: var(--slate);
}

.fare {
    margin-top: 7px;
    font-size: 70px;
    font-weight: 700;
    line-height: 80px;
}

.stats {
    display: grid;
    grid-template-columns: 1fr 2px 1fr;
    align-self: stretch;
    column-gap: 26px;
    margin-top: 30px;
    padding: 25px 0;
    border-top: 3px solid var(--line);
    border-bottom: 3px solid var(--line);
}

.stat-divider {
    height: 100px;
    background: var(--line);
}

.stat-label {
    font-size: 24px;
    font-weight: 800;
    line-height: 32px;
    letter-spacing: 1px;
    color: var(--grey);
}

.stat-value {
    display: flex;
    align-items: center;
    gap: 16px;
    padding-left: 4px;
    font-size: 36px;
    font-weight: 800;
    line-height: 48px;
}

.stat-car {
    width: 37px;
    height: 29px;
    fill: var(--slate);
}

.stat-route {
    width: 28px;
    height: 34px;
    fill: none;
    stroke: var(--mist);
    stroke-width: 3;
}

.stat-note {
    font-size: 28px;
    line-height: 37px;
    color: var(--grey);
}

.route {
    display: flex;
    gap: 26px;
    margin-top: 23px;
}

.route-marks {
    width: 35px;
    height: 104px;
}

.stops {
    list-style: none;
    font-size: 36px;
    font-weight: 500;
    line-height: 52px;
}

.drag-hint {
    display: flex;
    align-items: center;
    align-self: center;
    gap: 12px;
    margin-top: 21px;
    font-size: 28px;
    font-weight: 600;
    line-height: 36px;
    color: var(--mist);
}

.drag-hint svg {
    width: 28px;
    height: 18px;
    fill: none;
    stroke: var(--mist);
    stroke-width: 5;
    stroke-linecap: round;
    stroke-linejoin: round;
}

.accept-btn {
    align-self: stretch;
    height: 122px;
    margin-top: 25px;
    border-radius: 61px;
    font-size: 36px;
    font-weight: 600;
    background: var(--yellow);
}

/* Tab bar */
.tab-bar {
    display: grid;
    grid-template-columns: repeat(4, 1fr);
    margin: 40px 43px 0;
    padding: 25px 16px 23px;
    border: 2px solid rgba(235, 238, 245, 0.8);
    border-radius: 81px;
    background: rgba(220, 222, 224, 0.72);
    box-shadow: 0 8px 24px rgba(0, 0, 0, 0.08);
}

.tab {
    display: flex;
    flex-direction: column;
    align-items: center;
    gap: 7px;
    font-size: 24px;
    font-weight: 600;
    line-height: 32px;
    color: var(--navy);
    text-decoration: none;
}

.tab-icon {
    display: grid;
    place-items: center;
    width: 122px;
    height: 70px;
    border-radius: 35px;
    fill: var(--navy);
}

.active .tab-icon {
    background: var(--yellow);
}

.tab-car {
    width: 52px;
    height: 41px;
}

.tab-jobs {
    width: 52px;
    height: 43px;
    fill-rule: evenodd;
}

.tab-euro {
    width: 32px;
    height: 38px;
    fill: none;
    stroke: var(--navy);
    stroke-linecap: round;
}

.tab-profile {
    width: 45px;
    height: 45px;
    fill-rule: evenodd;
}

.attribution {
    display: flex;
    align-items: center;
    height: 72px;
    padding-left: 24px;
    color: #5a5a58;
}

.apple {
    width: 21px;
    height: 27px;
    fill: #5a5a58;
}

.maps {
    margin: 0 24px 0 4px;
    font-size: 31px;
    font-weight: 500;
}

.legal {
    font-size: 20px;
    color: #777672;
    text-underline-offset: 4px;
}
```
